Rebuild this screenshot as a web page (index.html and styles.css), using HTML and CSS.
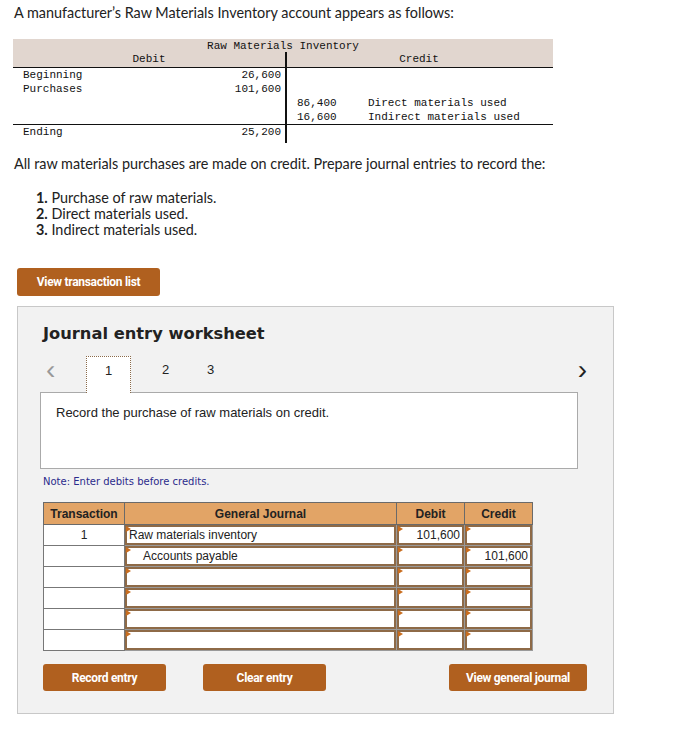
FILE: index.html
```html
<!DOCTYPE html>
<html lang="en">
<head>
    <meta charset="UTF-8">
    <meta name="viewport" content="width=device-width, initial-scale=1.0">
    <title>Journal entry worksheet</title>
    <link rel="stylesheet" href="styles.css">
</head>
<body>
    <p class="intro">A manufacturer’s Raw Materials Inventory account appears as follows:</p>

    <div class="taccount">
        <div class="t-title">Raw Materials Inventory</div>
        <div class="t-row t-head">
            <div class="t-left"><span class="t-center">Debit</span></div>
            <div class="t-right"><span class="t-center">Credit</span></div>
        </div>
        <div class="t-row">
            <div class="t-left"><span>Beginning</span><span>26,600</span></div>
            <div class="t-right"></div>
        </div>
        <div class="t-row">
            <div class="t-left"><span>Purchases</span><span>101,600</span></div>
            <div class="t-right"></div>
        </div>
        <div class="t-row">
            <div class="t-left"></div>
            <div class="t-right"><span class="t-amt">86,400</span><span>Direct materials used</span></div>
        </div>
        <div class="t-row t-ruled">
            <div class="t-left"></div>
            <div class="t-right"><span class="t-amt">16,600</span><span>Indirect materials used</span></div>
        </div>
        <div class="t-row t-last">
            <div class="t-left"><span>Ending</span><span>25,200</span></div>
            <div class="t-right"></div>
        </div>
    </div>

    <p class="question">All raw materials purchases are made on credit. Prepare journal entries to record the:</p>
    <ol class="steps">
        <li><b>1.</b> Purchase of raw materials.</li>
        <li><b>2.</b> Direct materials used.</li>
        <li><b>3.</b> Indirect materials used.</li>
    </ol>

    <button class="btn btn-list">View transaction list</button>

    <div class="worksheet">
        <h2>Journal entry worksheet</h2>
        <div class="tabs">
            <span class="arrow arrow-prev">&#8249;</span>
            <span class="tab active">1</span>
            <span class="tab">2</span>
            <span class="tab">3</span>
            <span class="arrow arrow-next">&#8250;</span>
        </div>
        <div class="prompt">Record the purchase of raw materials on credit.</div>
        <p class="note">Note: Enter debits before credits.</p>

        <table class="journal">
            <thead>
                <tr>
                    <th class="c-trans">Transaction</th>
                    <th class="c-acct">General Journal</th>
                    <th class="c-num">Debit</th>
                    <th class="c-num">Credit</th>
                </tr>
            </thead>
            <tbody>
                <tr>
                    <td class="trans">1</td>
                    <td><div class="field">Raw materials inventory</div></td>
                    <td><div class="field num">101,600</div></td>
                    <td><div class="field num"></div></td>
                </tr>
                <tr>
                    <td class="trans"></td>
                    <td><div class="field indent">Accounts payable</div></td>
                    <td><div class="field num"></div></td>
                    <td><div class="field num">101,600</div></td>
                </tr>
                <tr>
                    <td class="trans"></td>
                    <td><div class="field"></div></td>
                    <td><div class="field num"></div></td>
                    <td><div class="field num"></div></td>
                </tr>
                <tr>
                    <td class="trans"></td>
                    <td><div class="field"></div></td>
                    <td><div class="field num"></div></td>
                    <td><div class="field num"></div></td>
                </tr>
                <tr>
                    <td class="trans"></td>
                    <td><div class="field"></div></td>
                    <td><div class="field num"></div></td>
                    <td><div class="field num"></div></td>
                </tr>
                <tr>
                    <td class="trans"></td>
                    <td><div class="field"></div></td>
                    <td><div class="field num"></div></td>
                    <td><div class="field num"></div></td>
                </tr>
            </tbody>
        </table>

        <div class="actions">
            <button class="btn btn-record">Record entry</button>
            <button class="btn btn-clear">Clear entry</button>
            <button class="btn btn-view">View general journal</button>
        </div>
    </div>
</body>
</html>
```

FILE: styles.css
```css
body {
    margin: 0;
    padding: 4px 0 0 0;
    font-family: Lato, "Liberation Sans", sans-serif;
    font-size: 14.4px;
    color: #222;
    background-color: #fff;
}
p {
    margin: 0;
}
.intro {
    margin-left: 14px;
    line-height: 18px;
}

/* T-account */
.taccount {
    width: 540px;
    margin: 17px 0 0 13px;
    font-family: "Liberation Mono", "DejaVu Sans Mono", monospace;
    font-size: 11px;
    color: #111;
}
.t-title {
    height: 13px;
    line-height: 15px;
    text-align: center;
    background-color: #e1d6cf;
}
.t-row {
    display: grid;
    grid-template-columns: 274px 264px;
    height: 14px;
    line-height: 14px;
}
.t-left {
    display: flex;
    justify-content: space-between;
    padding: 0 4px 0 10px;
    border-right: 2px solid #111;
}
.t-right {
    display: flex;
    padding-left: 10px;
}
.t-amt {
    width: 71px;
}
.t-head {
    height: 15px;
    line-height: 15px;
    background-color: #e1d6cf;
    border-bottom: 1px solid #111;
}
.t-head .t-left,
.t-head .t-right {
    justify-content: center;
    padding: 0;
}
.t-ruled {
    border-bottom: 1px solid #111;
}
.t-last {
    height: 18px;
}

.question {
    margin: 12px 0 0 14px;
    line-height: 18px;
}
.steps {
    list-style: none;
    margin: 17px 0 0 0;
    padding: 0 0 0 36px;
    line-height: 16px;
}
.steps b {
    font-weight: 700;
}

.btn {
    border: none;
    border-radius: 3px;
    background-color: #b0601f;
    color: #fff;
    font-family: Roboto, "Liberation Sans", sans-serif;
    font-weight: 700;
    font-size: 12px;
    letter-spacing: -0.3px;
    height: 27px;
    padding: 0;
    cursor: pointer;
}
.btn-list {
    display: block;
    margin: 30px 0 0 17px;
    width: 143px;
    height: 28px;
}

/* worksheet panel */
.worksheet {
    width: 547px;
    margin: 10px 0 0 17px;
    padding: 16px 26px 22px 22px;
    background-color: #f2f2f2;
    border: 1px solid #c8c8c8;
}
.worksheet h2 {
    margin: 0 0 0 3px;
    font-family: "DejaVu Sans", Verdana, sans-serif;
    font-size: 16.3px;
    font-weight: 700;
    line-height: 22px;
    color: #222;
}
.tabs {
    display: flex;
    align-items: flex-end;
    height: 36px;
    margin-top: 11px;
    font-family: "Liberation Sans", Arial, sans-serif;
    font-size: 13px;
    color: #222;
}
.tab {
    width: 45px;
    height: 36px;
    line-height: 28px;
    text-align: center;
    box-sizing: border-box;
}
.tab.active {
    background-color: #fff;
    border: 1px dotted #8a6a4a;
    border-bottom: none;
    margin-right: 12px;
    position: relative;
    z-index: 1;
    height: 37px;
    margin-bottom: -1px;
}
.arrow {
    font-size: 28px;
    line-height: 28px;
    height: 36px;
    color: #999;
    width: 46px;
    padding-left: 6px;
    box-sizing: border-box;
}
.arrow-next {
    margin-left: auto;
    color: #222;
    width: auto;
    padding: 0;
}
.prompt {
    height: 75px;
    background-color: #fff;
    border: 1px solid #aaa;
    padding: 0 0 0 15px;
    width: 521px;
    font-family: "Liberation Sans", Arial, sans-serif;
    font-size: 13px;
    line-height: 40px;
    color: #222;
}
.note {
    margin: 7px 0 0 3px;
    font-family: "DejaVu Sans", Verdana, sans-serif;
    font-size: 10px;
    line-height: 12px;
    color: #2b2b8c;
}

/* journal table */
.journal {
    margin: 14px 0 0 3px;
    width: 490px;
    border-collapse: collapse;
    font-family: "Liberation Sans", Arial, sans-serif;
    font-size: 12px;
    color: #222;
    table-layout: fixed;
}
.journal th {
    background-color: #e2a466;
    border: 1px solid #6a6a6a;
    height: 21px;
    padding: 0;
    font-weight: 700;
}
.c-trans {
    width: 80px;
}
.c-num {
    width: 67px;
}
.journal td {
    border: 1px solid #9a9a9a;
    background-color: #fff;
    height: 19px;
    padding: 0;
}
.journal td.trans {
    text-align: center;
    border-color: #777;
}
.field {
    position: relative;
    height: 16px;
    line-height: 16px;
    border: 2px solid #8e6a47;
    padding: 0 2px;
    background-color: #fff;
    white-space: nowrap;
}
.field::before {
    content: "";
    position: absolute;
    left: -1px;
    top: -1px;
    border-left: 5px solid #c96d1f;
    border-top: 3px solid transparent;
    border-bottom: 3px solid transparent;
}
.field.num {
    text-align: right;
}
.field.indent {
    padding-left: 16px;
}

.actions {
    display: flex;
    margin: 13px 0 0 3px;
}
.btn-record,
.btn-clear {
    width: 123px;
}
.btn-clear {
    margin-left: 37px;
}
.btn-view {
    width: 138px;
    margin-left: auto;
}
```
